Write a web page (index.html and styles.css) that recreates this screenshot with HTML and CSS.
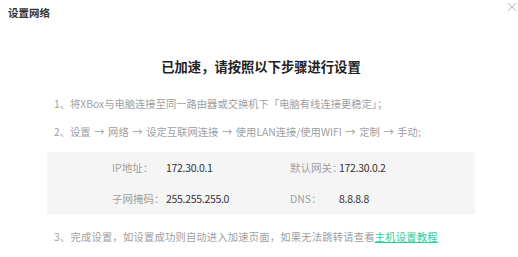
FILE: index.html
```html
<!DOCTYPE html>
<html lang="zh-CN">
<head>
    <meta charset="UTF-8">
    <meta name="viewport" content="width=device-width, initial-scale=1.0">
    <title>设置网络</title>
    <link rel="stylesheet" href="styles.css">
</head>
<body>

    <div class="dialog">
        <div class="dialog-header">
            <span class="dialog-title">设置网络</span>
            <span class="close">
                <svg width="10" height="10" viewBox="0 0 10 10">
                    <path d="M1 1L9 9M9 1L1 9" stroke="#b5b5b5" stroke-width="1" fill="none"/>
                </svg>
            </span>
        </div>

        <div class="dialog-body">
            <h2>已加速，请按照以下步骤进行设置</h2>

            <p class="step">1、将XBox与电脑连接至同一路由器或交换机下「电脑有线连接更稳定」；</p>
            <p class="step path">2、设置 → 网络 → 设定互联网连接 → 使用LAN连接/使用WIFI → 定制 → 手动;</p>

            <div class="net-info">
                <div class="net-row">
                    <span class="label">IP地址：</span>
                    <span class="value">172.30.0.1</span>
                    <span class="label">默认网关：</span>
                    <span class="value">172.30.0.2</span>
                </div>
                <div class="net-row">
                    <span class="label">子网掩码：</span>
                    <span class="value">255.255.255.0</span>
                    <span class="label">DNS：</span>
                    <span class="value">8.8.8.8</span>
                </div>
            </div>

            <p class="step last">3、完成设置，如设置成功则自动进入加速页面，如果无法跳转请查看<a href="#" class="guide-link">主机设置教程</a></p>
        </div>
    </div>

</body>
</html>
```

FILE: styles.css
```css
body {
    margin: 0;
    background: #fff;
    font-family: "Noto Sans CJK SC", "Noto Sans", sans-serif;
    color: #333;
}
.dialog {
    width: 518px;
    height: 257px;
    background: #fff;
}
.dialog-header {
    display: flex;
    justify-content: space-between;
    align-items: flex-start;
    height: 24px;
    padding: 0 1px 0 8px;
}
.dialog-title {
    margin-top: 6px;
    font-size: 10.5px;
    line-height: 14px;
    font-weight: bold;
    color: #333;
}
.close {
    margin-top: 2px;
    width: 10px;
    height: 10px;
    cursor: pointer;
}
.close svg {
    display: block;
}
.dialog-body {
    padding: 0 43px 0 47px;
}
h2 {
    margin: 33px 0 0;
    text-align: center;
    font-size: 13.3px;
    line-height: 20px;
    font-weight: bold;
    color: #222;
}
.step {
    margin: 19px 0 0;
    padding-left: 7px;
    font-size: 10.3px;
    line-height: 16px;
    color: #a0a0a0;
    white-space: nowrap;
}
.step + .step {
    margin-top: 12px;
}
.step.path {
    word-spacing: 1.3px;
}
.net-info {
    margin-top: 12px;
    background: #f5f5f5;
    padding-left: 65px;
}
.net-row {
    display: grid;
    grid-template-columns: 54px 124px 49px auto;
    height: 31px;
    line-height: 31px;
    font-size: 10.5px;
}
.label {
    color: #a0a0a0;
    white-space: nowrap;
}
.value {
    color: #333;
    letter-spacing: -0.3px;
}
.step.last {
    margin-top: 15px;
    letter-spacing: 0.2px;
}
.guide-link {
    color: #2fcf97;
    text-decoration: underline;
}
```
